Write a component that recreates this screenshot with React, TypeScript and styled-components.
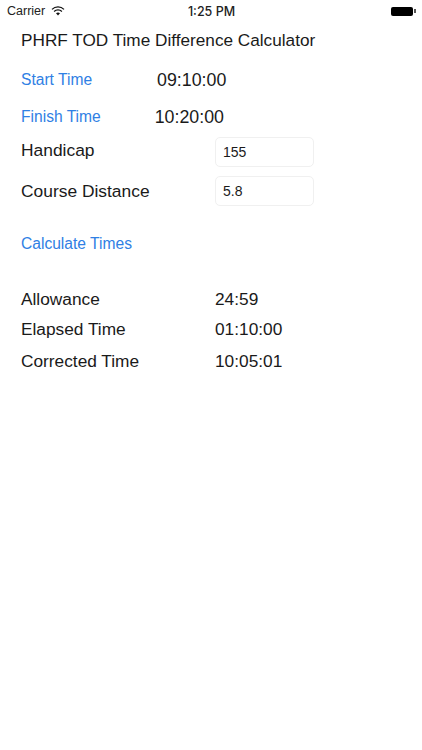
import React from "react";
import styled, { createGlobalStyle } from "styled-components";

const GlobalStyle = createGlobalStyle`
  html, body {
    margin: 0;
    padding: 0;
    background: #fff;
  }
  body {
    font-family: "Liberation Sans", Arial, sans-serif;
    color: #1a1a1a;
  }
`;

const Screen = styled.div`
  width: 422px;
  height: 750px;
  overflow: hidden;
  background: #fff;
`;

const StatusBar = styled.div`
  height: 22px;
  display: grid;
  grid-template-columns: 1fr auto 1fr;
  align-items: center;
  padding: 0 6px 0 7px;
  font-size: 12.5px;
  color: #222;
`;

const Carrier = styled.div`
  display: flex;
  align-items: center;
  gap: 6px;
`;

const Clock = styled.div`
  font-family: "Inter", sans-serif;
  font-weight: 500;
  font-size: 12.5px;
`;

const BatteryWrap = styled.div`
  display: flex;
  justify-content: flex-end;
  align-items: center;
`;

const Battery = styled.div`
  width: 22px;
  height: 9px;
  background: #000;
  border-radius: 2px;
`;

const BatteryTip = styled.div`
  width: 2px;
  height: 4px;
  margin-left: 1px;
  background: #555;
`;

const Content = styled.div`
  padding: 0 0 0 21px;
`;

const Title = styled.div`
  font-size: 17.2px;
  line-height: 20px;
  margin-top: 8px;
`;

const TimeRow = styled.div<{ $top: number; $indent: number }>`
  display: flex;
  align-items: center;
  height: 22px;
  margin-top: ${p => p.$top}px;
  & > span:last-child {
    margin-left: ${p => p.$indent}px;
  }
`;

const LinkLabel = styled.span`
  font-size: 15.6px;
  color: #2f80e4;
`;

const TimeValue = styled.span`
  font-size: 17.8px;
`;

const FieldRow = styled.div<{ $top: number }>`
  display: grid;
  grid-template-columns: 194px 99px;
  align-items: center;
  margin-top: ${p => p.$top}px;
`;

const FieldLabel = styled.div<{ $lift: number }>`
  font-size: 17.4px;
  margin-bottom: ${p => p.$lift}px;
`;

const FieldBox = styled.div`
  height: 30px;
  box-sizing: border-box;
  border: 1px solid #f0f0f0;
  border-radius: 5px;
  padding-left: 7px;
  display: flex;
  align-items: center;
  font-size: 14px;
`;

const CalculateLink = styled(LinkLabel)`
  display: block;
  line-height: 20px;
  margin-top: 28px;
`;

const Results = styled.div`
  margin-top: 31px;
`;

const ResultRow = styled.div<{ $height: number }>`
  display: grid;
  grid-template-columns: 194px auto;
  align-items: center;
  height: ${p => p.$height}px;
  font-size: 17.3px;
`;

function WifiIcon() {
  return (
    <svg width="14" height="10" viewBox="0 0 13 10">
      <path d="M0.5 3.4a8.6 8.6 0 0 1 12 0" fill="none" stroke="#111" strokeWidth="1.3" />
      <path d="M2.6 5.5a5.6 5.6 0 0 1 7.8 0" fill="none" stroke="#111" strokeWidth="1.3" />
      <path d="M4.5 7.3a3 3 0 0 1 4 0L6.5 9.6z" fill="#111" />
    </svg>
  );
}

const results = [
  { label: "Allowance", value: "24:59", height: 29 },
  { label: "Elapsed Time", value: "01:10:00", height: 30 },
  { label: "Corrected Time", value: "10:05:01", height: 34 }
];

export default function App() {
  return (
    <Screen>
      <GlobalStyle />
      <StatusBar>
        <Carrier>
          Carrier
          <WifiIcon />
        </Carrier>
        <Clock>1:25 PM</Clock>
        <BatteryWrap>
          <Battery />
          <BatteryTip />
        </BatteryWrap>
      </StatusBar>
      <Content>
        <Title>PHRF TOD Time Difference Calculator</Title>
        <TimeRow $top={19} $indent={65}>
          <LinkLabel>Start Time</LinkLabel>
          <TimeValue>09:10:00</TimeValue>
        </TimeRow>
        <TimeRow $top={15} $indent={54}>
          <LinkLabel>Finish Time</LinkLabel>
          <TimeValue>10:20:00</TimeValue>
        </TimeRow>
        <FieldRow $top={9}>
          <FieldLabel $lift={3}>Handicap</FieldLabel>
          <FieldBox>155</FieldBox>
        </FieldRow>
        <FieldRow $top={9}>
          <FieldLabel $lift={0}>Course Distance</FieldLabel>
          <FieldBox>5.8</FieldBox>
        </FieldRow>
        <CalculateLink>Calculate Times</CalculateLink>
        <Results>
          {results.map(row => (
            <ResultRow key={row.label} $height={row.height}>
              <span>{row.label}</span>
              <span>{row.value}</span>
            </ResultRow>
          ))}
        </Results>
      </Content>
    </Screen>
  );
}
